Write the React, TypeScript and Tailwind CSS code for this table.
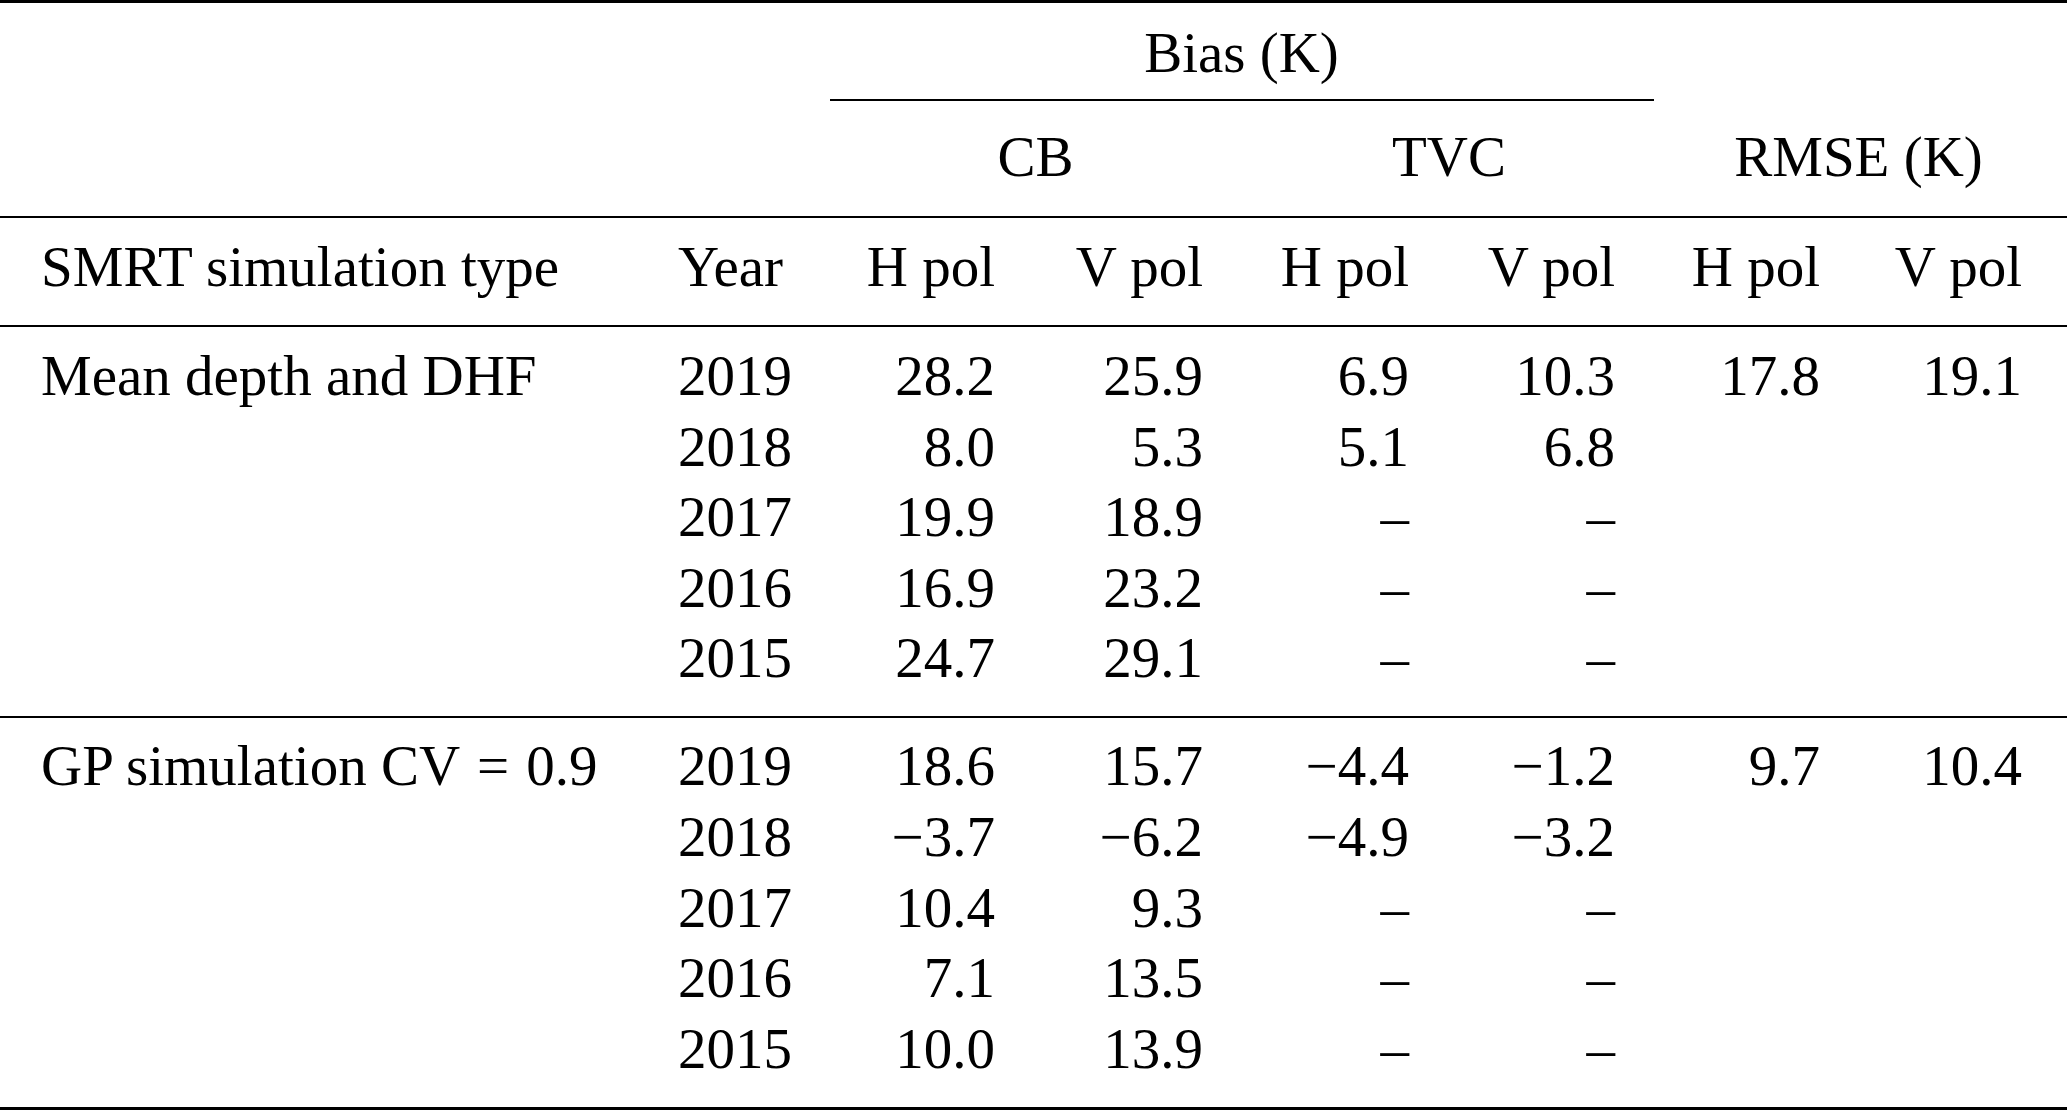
type Group = {
  label: React.ReactNode
  rmse: [string, string]
  rows: [string, string, string, string, string][]
}

const COLS = "grid grid-cols-[638px_190px_207px_208px_206px_206px_205px_202px]"

const GROUPS: Group[] = [
  {
    label: "Mean depth and DHF",
    rmse: ["17.8", "19.1"],
    rows: [
      ["2019", "28.2", "25.9", "6.9", "10.3"],
      ["2018", "8.0", "5.3", "5.1", "6.8"],
      ["2017", "19.9", "18.9", "–", "–"],
      ["2016", "16.9", "23.2", "–", "–"],
      ["2015", "24.7", "29.1", "–", "–"],
    ],
  },
  {
    label: (
      <>
        GP simulation CV<span className="mx-[17px]">=</span>0.9
      </>
    ),
    rmse: ["9.7", "10.4"],
    rows: [
      ["2019", "18.6", "15.7", "−4.4", "−1.2"],
      ["2018", "−3.7", "−6.2", "−4.9", "−3.2"],
      ["2017", "10.4", "9.3", "–", "–"],
      ["2016", "7.1", "13.5", "–", "–"],
      ["2015", "10.0", "13.9", "–", "–"],
    ],
  },
]

const Num = ({ children }: { children: React.ReactNode }) => (
  <div className="pr-[40px] text-right">{children}</div>
)

const GroupRows = ({ group, top }: { group: Group; top: string }) => (
  <div className={`${COLS} ${top}`}>
    {group.rows.map((row, i) => (
      <div key={row[0]} className="contents">
        <div className="pl-[41px] whitespace-nowrap">{i === 0 ? group.label : ""}</div>
        <div className="pl-[40px]">{row[0]}</div>
        <Num>{row[1]}</Num>
        <Num>{row[2]}</Num>
        <Num>{row[3]}</Num>
        <Num>{row[4]}</Num>
        <Num>{i === 0 ? group.rmse[0] : ""}</Num>
        <Num>{i === 0 ? group.rmse[1] : ""}</Num>
      </div>
    ))}
  </div>
)

export default function App() {
  return (
    <div className="min-h-screen w-[2067px] bg-white font-['Liberation_Serif',serif] text-[57px] leading-[70.6px] text-black">
      <div className="h-[3px] bg-black" />

      <div className={`${COLS} pt-[15px]`}>
        <div className="col-start-3 col-span-4 text-center">Bias (K)</div>
      </div>

      <div className={`${COLS} mt-[10.4px]`}>
        <div className="col-start-3 col-span-4 ml-[2px] mr-[1px] h-[2px] bg-black" />
      </div>

      <div className={`${COLS} pt-[21.5px]`}>
        <div className="col-start-3 col-span-2 text-center">CB</div>
        <div className="col-span-2 text-center">TVC</div>
        <div className="col-span-2 text-center">RMSE (K)</div>
      </div>

      <div className="mt-[22.9px] h-[2px] bg-black" />

      <div className={`${COLS} pt-[14.5px]`}>
        <div className="pl-[41px]">SMRT simulation type</div>
        <div className="pl-[40px]">Year</div>
        <Num>H pol</Num>
        <Num>V pol</Num>
        <Num>H pol</Num>
        <Num>V pol</Num>
        <Num>H pol</Num>
        <Num>V pol</Num>
      </div>

      <div className="mt-[21.9px] h-[2px] bg-black" />

      <GroupRows group={GROUPS[0]} top="pt-[14px]" />

      <div className="mt-[22px] h-[2px] bg-black" />

      <GroupRows group={GROUPS[1]} top="pt-[13.5px]" />

      <div className="mt-[22.5px] h-[3px] bg-black" />
    </div>
  )
}
